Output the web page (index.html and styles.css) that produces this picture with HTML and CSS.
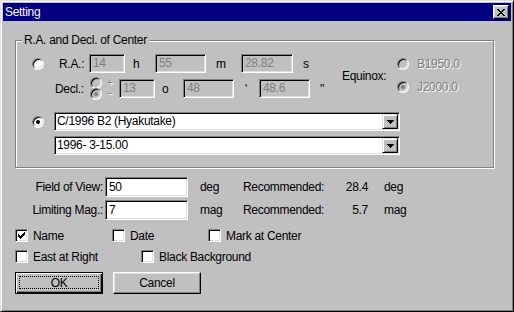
FILE: index.html
```html
<!DOCTYPE html>
<html lang="en">
<head>
    <meta charset="UTF-8">
    <title>Setting</title>
    <link rel="stylesheet" href="styles.css">
</head>
<body>
    <div class="window">
        <div class="titlebar">
            <span class="title">Setting</span>
            <span class="close-btn">
                <svg width="8" height="7" viewBox="0 0 8 7" shape-rendering="crispEdges"><path d="M0 0h2v1H0z M6 0h2v1H6z M1 1h2v1H1z M5 1h2v1H5z M2 2h4v1H2z M3 3h2v1H3z M2 4h4v1H2z M1 5h2v1H1z M5 5h2v1H5z M0 6h2v1H0z M6 6h2v1H6z" fill="#000"/></svg>
            </span>
        </div>

        <div class="dialog">
            <div class="group">
                <span class="group-title">R.A. and Decl. of Center</span>

                <div class="coords">
                    <div class="coord-rows">
                        <div class="coord-row">
                            <span class="radio"></span>
                            <span class="lbl lbl-ra">R.A.:</span>
                            <span class="edit disabled w-short">14</span>
                            <span class="unit u-h">h</span>
                            <span class="edit disabled w-mid">55</span>
                            <span class="unit u-m">m</span>
                            <span class="edit disabled w-long">28.82</span>
                            <span class="unit u-s">s</span>
                        </div>
                        <div class="coord-row">
                            <span class="lbl lbl-decl">Decl.:</span>
                            <span class="signs">
                                <span class="sign"><span class="radio disabled"></span><span class="sign-text dis-text">+</span></span>
                                <span class="sign"><span class="radio disabled checked"></span><span class="sign-text dis-text">&minus;</span></span>
                            </span>
                            <span class="edit disabled w-short">13</span>
                            <span class="unit u-deg">o</span>
                            <span class="edit disabled w-mid">48</span>
                            <span class="unit u-min">'</span>
                            <span class="edit disabled w-mid">48.6</span>
                            <span class="unit u-sec">"</span>
                        </div>
                    </div>

                    <span class="equinox-label">Equinox:</span>
                    <div class="equinox-opts">
                        <span class="opt"><span class="radio disabled"></span><span class="opt-text dis-text">B1950.0</span></span>
                        <span class="opt"><span class="radio disabled checked"></span><span class="opt-text dis-text">J2000.0</span></span>
                    </div>
                </div>

                <div class="comet">
                    <span class="radio checked comet-radio"></span>
                    <div class="combo-list">
                        <div class="combo">
                            <span class="combo-text">C/1996 B2 (Hyakutake)</span>
                            <span class="drop-btn"><svg width="7" height="4" viewBox="0 0 7 4" shape-rendering="crispEdges"><path d="M0 0h7v1H0z M1 1h5v1H1z M2 2h3v1H2z M3 3h1v1H3z" fill="#000"/></svg></span>
                        </div>
                        <div class="combo">
                            <span class="combo-text">1996- 3-15.00</span>
                            <span class="drop-btn"><svg width="7" height="4" viewBox="0 0 7 4" shape-rendering="crispEdges"><path d="M0 0h7v1H0z M1 1h5v1H1z M2 2h3v1H2z M3 3h1v1H3z" fill="#000"/></svg></span>
                        </div>
                    </div>
                </div>
            </div>

            <div class="fields">
                <div class="field-row">
                    <span class="field-label">Field of View:</span>
                    <span class="edit wide">50</span>
                    <span class="field-unit">deg</span>
                    <span class="rec-label">Recommended:</span>
                    <span class="rec-value">28.4</span>
                    <span class="rec-unit">deg</span>
                </div>
                <div class="field-row">
                    <span class="field-label">Limiting Mag.:</span>
                    <span class="edit wide">7</span>
                    <span class="field-unit">mag</span>
                    <span class="rec-label">Recommended:</span>
                    <span class="rec-value">5.7</span>
                    <span class="rec-unit">mag</span>
                </div>
            </div>

            <div class="options">
                <div class="check-row">
                    <span class="check-item ci-name">
                        <span class="checkbox"><svg width="7" height="7" viewBox="0 0 7 7" shape-rendering="crispEdges"><path d="M6 0h1v1H6z M5 1h2v1H5z M0 2h1v1H0z M4 2h3v1H4z M0 3h2v1H0z M3 3h3v1H3z M0 4h5v1H0z M1 5h3v1H1z M2 6h1v1H2z" fill="#000"/></svg></span>
                        <span class="check-text">Name</span>
                    </span>
                    <span class="check-item ci-date">
                        <span class="checkbox"></span>
                        <span class="check-text">Date</span>
                    </span>
                    <span class="check-item">
                        <span class="checkbox"></span>
                        <span class="check-text">Mark at Center</span>
                    </span>
                </div>
                <div class="check-row">
                    <span class="check-item ci-east">
                        <span class="checkbox"></span>
                        <span class="check-text">East at Right</span>
                    </span>
                    <span class="check-item">
                        <span class="checkbox"></span>
                        <span class="check-text">Black Background</span>
                    </span>
                </div>
            </div>

            <div class="buttons">
                <span class="btn default"><span class="focus">OK</span></span>
                <span class="btn">Cancel</span>
            </div>
        </div>
    </div>
</body>
</html>
```

FILE: styles.css
```css
:root {
    --face: #c0c0c0;
    --light: #dfdfdf;
    --shadow: #808080;
    --title: #000080;
}

body {
    margin: 0;
    background: var(--face);
    font-family: "Liberation Sans", Arial, sans-serif;
    font-size: 12px;
    letter-spacing: -0.3px;
    color: #000;
}

.window {
    width: 514px;
    height: 312px;
    box-sizing: border-box;
    border: 1px solid;
    border-color: var(--light) #000 #000 var(--light);
    box-shadow: inset 1px 1px #fff, inset -1px -1px var(--shadow);
    padding: 2px;
    background: var(--face);
}

.titlebar {
    height: 18px;
    background: var(--title);
    color: #fff;
    display: flex;
    align-items: center;
    justify-content: space-between;
    padding: 0 2px;
}

.title {
    line-height: 14px;
}

.close-btn {
    width: 16px;
    height: 14px;
    box-sizing: border-box;
    display: flex;
    align-items: center;
    justify-content: center;
    background: var(--face);
    border: 1px solid;
    border-color: #fff #000 #000 #fff;
    box-shadow: inset -1px -1px var(--shadow), inset 1px 1px var(--light);
}

.dialog {
    padding-left: 12px;
}

/* group box */
.group {
    position: relative;
    width: 479px;
    height: 128px;
    box-sizing: border-box;
    margin-top: 19px;
    border: 1px solid var(--shadow);
    box-shadow: inset 1px 1px #fff, 1px 1px #fff;
}

.group-title {
    position: absolute;
    left: 6px;
    top: -8px;
    padding: 0 2px;
    background: var(--face);
    line-height: 14px;
}

.coords {
    display: flex;
    padding: 13px 0 0 16px;
}

.coord-rows {
    width: 310px;
    display: flex;
    flex-direction: column;
    gap: 6px;
}

.coord-row {
    display: flex;
    align-items: center;
    height: 19px;
}

.lbl-ra {
    margin-left: 15px;
    width: 30px;
}

.lbl-decl {
    margin-left: 23px;
    width: 35px;
}

.unit {
    box-sizing: border-box;
}

.u-h { width: 30px; padding-left: 8px; }
.u-m { width: 35px; padding-left: 10px; }
.u-s { padding-left: 10px; }
.u-deg { width: 28px; padding-left: 7px; }
.u-min { width: 25px; padding-left: 11px; }
.u-sec { padding-left: 10px; }

.signs {
    width: 29px;
    height: 19px;
    display: flex;
    flex-direction: column;
    justify-content: center;
}

.sign {
    display: flex;
    align-items: center;
    height: 12px;
}

.sign + .sign {
    margin-top: -1px;
}

.sign-text {
    margin-left: 5px;
    font-size: 10px;
    line-height: 10px;
}

.equinox-label {
    width: 55px;
    align-self: center;
    line-height: 14px;
}

.equinox-opts {
    display: flex;
    flex-direction: column;
    gap: 9px;
    padding-top: 3px;
}

.opt {
    display: flex;
    align-items: center;
    height: 14px;
}

.opt-text {
    margin-left: 8px;
}

.dis-text {
    color: var(--shadow);
    text-shadow: 1px 1px #fff;
}

/* controls */
.radio {
    width: 12px;
    height: 12px;
    flex: none;
    box-sizing: border-box;
    border-radius: 50%;
    border: 1px solid;
    border-color: var(--shadow) #fff #fff var(--shadow);
    box-shadow: inset 1px 1px #000, inset -1px -1px var(--light);
    background: #fff;
    display: inline-flex;
    align-items: center;
    justify-content: center;
}

.radio.disabled {
    background: var(--face);
}

.radio.checked::after {
    content: "";
    width: 4px;
    height: 4px;
    border-radius: 50%;
    background: #000;
}

.radio.disabled.checked::after {
    background: var(--shadow);
}

.edit {
    box-sizing: border-box;
    height: 19px;
    border: 1px solid;
    border-color: var(--shadow) #fff #fff var(--shadow);
    box-shadow: inset 1px 1px #000, inset -1px -1px var(--light);
    background: #fff;
    padding: 0 3px;
    line-height: 17px;
    white-space: nowrap;
    overflow: hidden;
}

.edit.disabled {
    background: var(--face);
    color: var(--shadow);
}

.w-short { width: 36px; }
.w-mid { width: 51px; }
.w-long { width: 52px; }

.comet {
    display: flex;
    align-items: flex-start;
    padding: 14px 0 0 16px;
}

.comet-radio {
    margin: 4px 10px 0 0;
}

.combo-list {
    display: flex;
    flex-direction: column;
    gap: 5px;
}

.combo {
    width: 346px;
    height: 19px;
    box-sizing: border-box;
    border: 1px solid;
    border-color: var(--shadow) #fff #fff var(--shadow);
    box-shadow: inset 1px 1px #000, inset -1px -1px var(--light);
    background: #fff;
    display: flex;
    align-items: center;
    justify-content: space-between;
    padding: 1px 1px 1px 2px;
}

.combo-text {
    line-height: 15px;
}

.drop-btn {
    width: 16px;
    height: 15px;
    box-sizing: border-box;
    background: var(--face);
    border: 1px solid;
    border-color: var(--light) #000 #000 var(--light);
    box-shadow: inset 1px 1px #fff, inset -1px -1px var(--shadow);
    display: flex;
    align-items: center;
    justify-content: center;
}

/* field rows */
.fields {
    margin-top: 9px;
}

.field-row {
    display: flex;
    align-items: center;
    height: 20px;
}

.field-row + .field-row {
    margin-top: 3px;
}

.field-label {
    width: 88px;
    text-align: right;
}

.edit.wide {
    width: 83px;
    height: 20px;
    margin-left: 2px;
    line-height: 18px;
}

.field-unit {
    width: 43px;
    margin-left: 12px;
}

.rec-label {
    width: 85px;
}

.rec-value {
    width: 40px;
    text-align: right;
}

.rec-unit {
    margin-left: 16px;
}

/* check boxes */
.options {
    margin-top: 9px;
}

.check-row {
    display: flex;
    align-items: center;
    height: 13px;
}

.check-row + .check-row {
    margin-top: 8px;
}

.check-item {
    display: flex;
    align-items: center;
}

.ci-name { width: 97px; }
.ci-date { width: 96px; }
.ci-east { width: 126px; }

.checkbox {
    width: 13px;
    height: 13px;
    flex: none;
    box-sizing: border-box;
    border: 1px solid;
    border-color: var(--shadow) #fff #fff var(--shadow);
    box-shadow: inset 1px 1px #000, inset -1px -1px var(--light);
    background: #fff;
    display: flex;
    align-items: center;
    justify-content: center;
}

.check-text {
    margin-left: 5px;
    line-height: 14px;
}

/* buttons */
.buttons {
    display: flex;
    gap: 10px;
    margin-top: 9px;
}

.btn {
    width: 88px;
    height: 22px;
    box-sizing: border-box;
    border: 1px solid;
    border-color: #fff #000 #000 #fff;
    box-shadow: inset -1px -1px var(--shadow), inset 1px 1px var(--light);
    display: flex;
    align-items: center;
    justify-content: center;
}

.btn.default {
    border-color: #000;
    box-shadow: inset 1px 1px #fff, inset -1px -1px #000, inset -2px -2px var(--shadow);
    padding: 3px 3px 4px 3px;
}

.focus {
    flex: 1;
    align-self: stretch;
    border: 1px dotted #000;
    display: flex;
    align-items: center;
    justify-content: center;
}
```
